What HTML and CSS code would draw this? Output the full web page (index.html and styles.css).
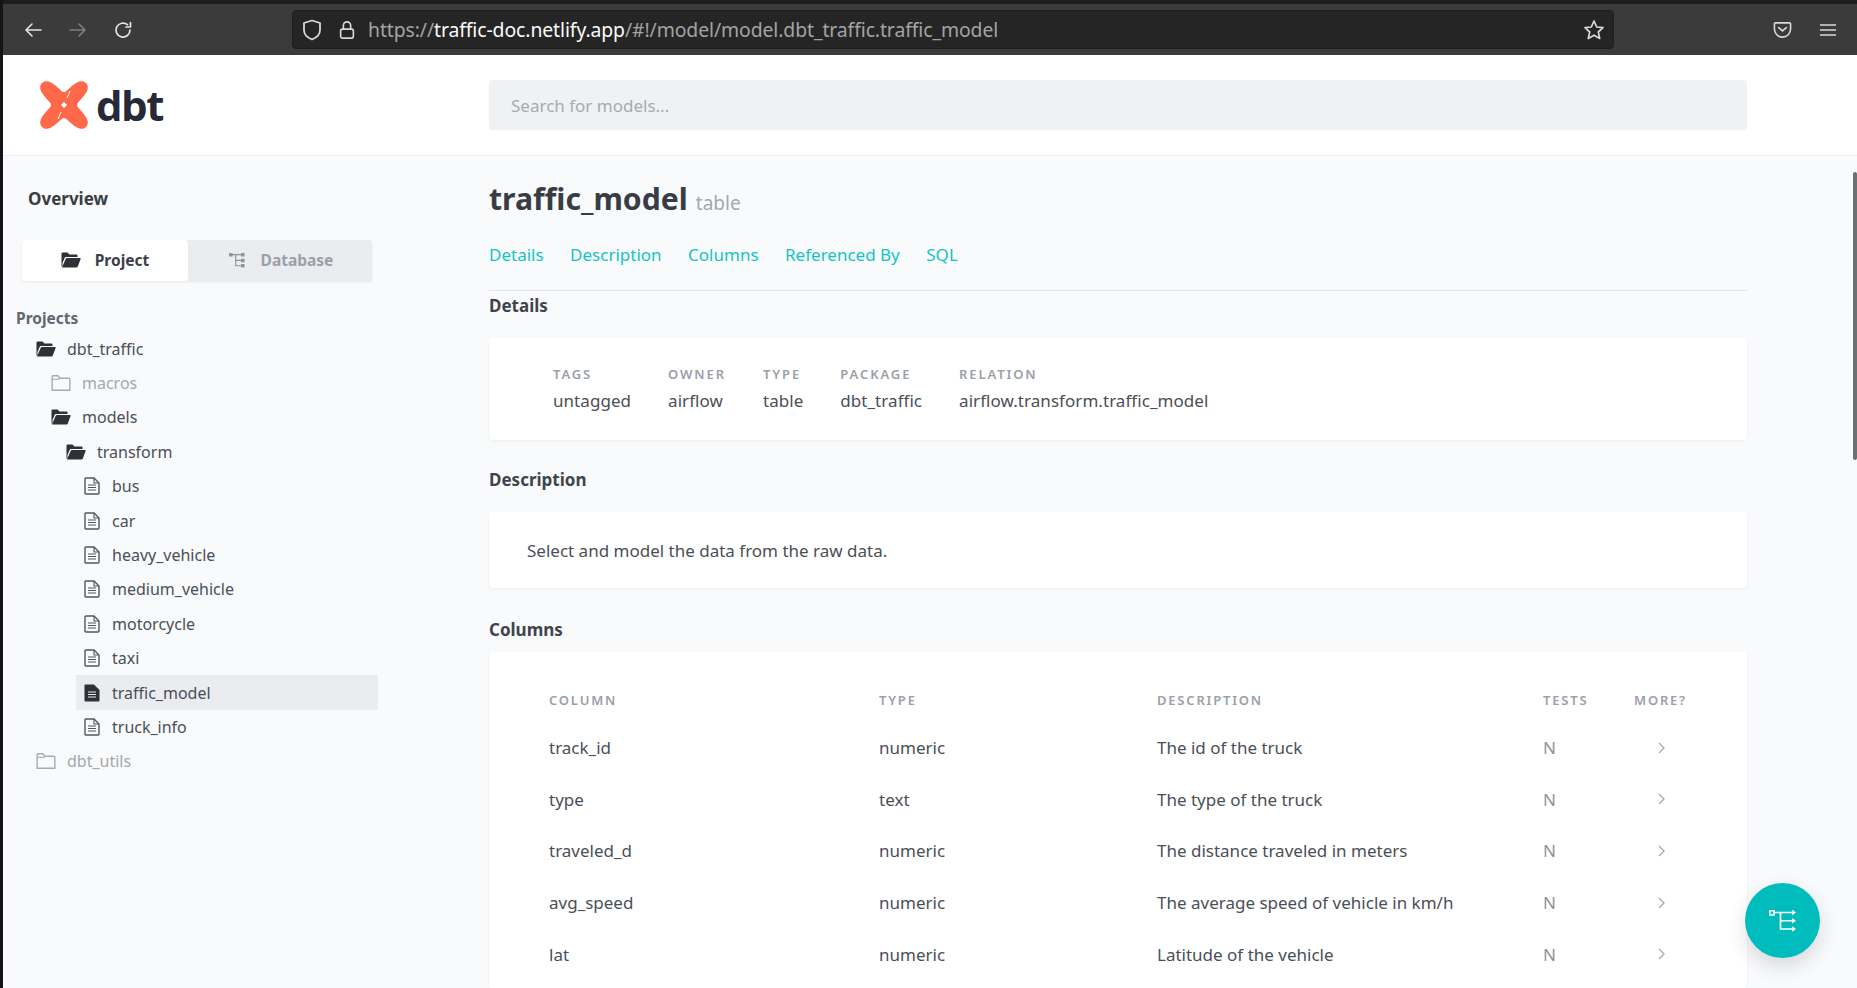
FILE: index.html
```html
<!DOCTYPE html>
<html>
<head>
  <meta name="viewport" content="width=device-width, initial-scale=1.0">
  <title>dbt Docs</title>
  <link rel="stylesheet" href="styles.css">
</head>
<body>
  <svg class="icon_defs" width="0" height="0">
    <symbol id="i_open" viewBox="0 0 20 16">
      <path d="M0.5 14.5V1.5Q0.5 0.5 1.5 0.5H6.5L8.5 2.5H15.5Q16.5 2.5 16.5 3.5V5H5Q4 5 3.6 6L1.5 11V14.5Z" fill="#2d3138"/>
      <path d="M1 15.5L4.6 7Q5 6 6 6H19Q20 6 19.6 7L16.8 14.6Q16.4 15.5 15.5 15.5Z" fill="#2d3138"/>
    </symbol>
    <symbol id="i_closed" viewBox="0 0 18 15">
      <path d="M0.7 14.3V1.7Q0.7 0.7 1.7 0.7H6L8 3H16.3Q17.3 3 17.3 4V14.3Z" fill="none" stroke="#a5abb3" stroke-width="1.3"/>
      <path d="M0.7 4H8" fill="none" stroke="#a5abb3" stroke-width="1"/>
    </symbol>
    <symbol id="i_file" viewBox="0 0 16 18">
      <path d="M1 16V2Q1 1 2 1H10L15 6V16Q15 17 14 17H2Q1 17 1 16Z" fill="none" stroke="#51565e" stroke-width="1.4"/>
      <path d="M10 1V6H15M4 8H12M4 10.5H12M4 13H12" fill="none" stroke="#51565e" stroke-width="1.1"/>
    </symbol>
    <symbol id="i_file_on" viewBox="0 0 16 18">
      <path d="M0.5 16.5V1.5Q0.5 0.5 1.5 0.5H10L15.5 6V16.5Q15.5 17.5 14.5 17.5H1.5Q0.5 17.5 0.5 16.5Z" fill="#2d3138"/>
      <path d="M4 8H12M4 10.5H12M4 13H12" fill="none" stroke="#eaebee" stroke-width="1.2"/>
    </symbol>
    <symbol id="i_tree" viewBox="0 0 18 18">
      <path d="M3 3H15M7.5 3V15.5H15M7.5 9.5H15" fill="none" stroke="#8f959d" stroke-width="1.3"/>
      <path d="M0 1H4V5H0ZM13.5 1H17.5V5H13.5ZM13.5 7.5H17.5V11.5H13.5ZM13.5 13.5H17.5V17.5H13.5Z" fill="#8f959d"/>
    </symbol>
    <symbol id="i_graph" viewBox="0 0 27 25">
      <path d="M0.8 2.8H5V7H0.8Z" fill="none" stroke="#fff" stroke-width="1.6"/>
      <path d="M5 4.5H24M11.5 4.5V21H24M11.5 12.7H24" fill="none" stroke="#fff" stroke-width="1.6"/>
      <path d="M23 1.8L27 4.5L23 7.2ZM23 10L27 12.7L23 15.4ZM23 18.3L27 21L23 23.7Z" fill="#fff"/>
    </symbol>
    <symbol id="i_more" viewBox="0 0 7 12">
      <path d="M1 1L6 6L1 11" fill="none" stroke="#a3a8af" stroke-width="1.3"/>
    </symbol>
  </svg>

  <div class="browser_bar">
    <div class="nav_btns">
      <svg class="chrome_icon" viewBox="0 0 20 20"><path d="M18 10H3M9 4L3 10L9 16" fill="none" stroke="#e4e4e4" stroke-width="1.6" stroke-linecap="round" stroke-linejoin="round"/></svg>
      <svg class="chrome_icon" viewBox="0 0 20 20"><path d="M2 10H17M11 4L17 10L11 16" fill="none" stroke="#7f7f7f" stroke-width="1.6" stroke-linecap="round" stroke-linejoin="round"/></svg>
      <svg class="chrome_icon" viewBox="0 0 20 20"><path d="M17 10A7 7 0 1 1 14.5 4.7M17.5 2.5V7H13" fill="none" stroke="#e4e4e4" stroke-width="1.7" stroke-linecap="round" stroke-linejoin="round"/></svg>
    </div>
    <div class="url_bar">
      <svg class="shield" viewBox="0 0 20 22"><path d="M10 1.5L18 4V11C18 16 14 19 10 20.5C6 19 2 16 2 11V4Z" fill="none" stroke="#d8d8d8" stroke-width="1.8" stroke-linejoin="round"/></svg>
      <svg class="lock" viewBox="0 0 18 22"><path d="M5 10V6A4 4 0 0 1 13 6V10" fill="none" stroke="#d8d8d8" stroke-width="1.8"/><rect x="2" y="10" width="14" height="10" rx="2" fill="none" stroke="#d8d8d8" stroke-width="1.8"/></svg>
      <span class="url_text"><span class="url_dim">https://</span>traffic-doc.netlify.app<span class="url_dim">/#!/model/model.dbt_traffic.traffic_model</span></span>
      <svg class="star" viewBox="0 0 22 22"><path d="M11 2L13.7 8L20 8.7L15.3 13L16.7 19.5L11 16.2L5.3 19.5L6.7 13L2 8.7L8.3 8Z" fill="none" stroke="#d8d8d8" stroke-width="1.7" stroke-linejoin="round"/></svg>
    </div>
    <div class="bar_right">
      <svg class="pocket" viewBox="0 0 20 18"><path d="M2.5 1.5H17.5Q18.5 1.5 18.5 2.5V8A8.5 8.5 0 0 1 1.5 8V2.5Q1.5 1.5 2.5 1.5Z" fill="none" stroke="#d8d8d8" stroke-width="1.7"/><path d="M6 6.5L10 10L14 6.5" fill="none" stroke="#d8d8d8" stroke-width="1.7" stroke-linecap="round"/></svg>
      <svg class="burger" viewBox="0 0 16 14"><path d="M0 2H16M0 7H16M0 12H16" stroke="#d8d8d8" stroke-width="1.6"/></svg>
    </div>
  </div>

  <div class="page">
    <header class="site_header">
      <div class="logo">
        <svg class="logo_mark" viewBox="0 0 48 48">
          <path d="M2 2C4.5-.5 8-.2 11 1.5C13 2.6 15 4 21 9.5Q24 12.5 27 9.5C33 4 35 2.6 37 1.5C40-.2 43.5-.5 46 2C48.5 4.5 48.2 8 46.5 11C45.4 13 44 15 38.5 21Q35.5 24 38.5 27C44 33 45.4 35 46.5 37C48.2 40 48.5 43.5 46 46C43.5 48.5 40 48.2 37 46.5C35 45.4 33 44 27 38.5Q24 35.5 21 38.5C15 44 13 45.4 11 46.5C8 48.2 4.5 48.5 2 46C-.5 43.5-.2 40 1.5 37C2.6 35 4 33 9.5 27Q12.5 24 9.5 21C4 15 2.6 13 1.5 11C-.2 8-.5 4.5 2 2Z" fill="#ff694a"/>
          <path d="M24 21L27 24L24 27L21 24Z" fill="#fff"/>
          <path d="M30 10C29 12.500 28 15 27 17M18 38C19 35.500 20 33 21 31" fill="none" stroke="#fff" stroke-width="1"/>
        </svg>
        <span class="logo_text">dbt</span>
      </div>
      <div class="search_box">Search for models...</div>
    </header>

    <div class="page_body">
      <aside class="sidebar">
        <div class="overview_link">Overview</div>
        <div class="switcher">
          <div class="switch_tab switch_active"><svg class="switch_icon"><use href="#i_open"/></svg>Project</div>
          <div class="switch_tab"><svg class="switch_icon"><use href="#i_tree"/></svg>Database</div>
        </div>
        <div class="tree_title">Projects</div>
        <ul class="tree">
          <li class="tree_row depth1"><svg class="folder_icon"><use href="#i_open"/></svg>dbt_traffic</li>
          <li class="tree_row depth2 faded"><svg class="folder_icon"><use href="#i_closed"/></svg>macros</li>
          <li class="tree_row depth2"><svg class="folder_icon"><use href="#i_open"/></svg>models</li>
          <li class="tree_row depth3"><svg class="folder_icon"><use href="#i_open"/></svg>transform</li>
          <li class="tree_row depth4"><svg class="file_icon"><use href="#i_file"/></svg>bus</li>
          <li class="tree_row depth4"><svg class="file_icon"><use href="#i_file"/></svg>car</li>
          <li class="tree_row depth4"><svg class="file_icon"><use href="#i_file"/></svg>heavy_vehicle</li>
          <li class="tree_row depth4"><svg class="file_icon"><use href="#i_file"/></svg>medium_vehicle</li>
          <li class="tree_row depth4"><svg class="file_icon"><use href="#i_file"/></svg>motorcycle</li>
          <li class="tree_row depth4"><svg class="file_icon"><use href="#i_file"/></svg>taxi</li>
          <li class="tree_row depth4 selected"><svg class="file_icon"><use href="#i_file_on"/></svg>traffic_model</li>
          <li class="tree_row depth4"><svg class="file_icon"><use href="#i_file"/></svg>truck_info</li>
          <li class="tree_row depth1 faded"><svg class="folder_icon"><use href="#i_closed"/></svg>dbt_utils</li>
        </ul>
      </aside>

      <main class="content">
        <div class="title_line">
          <h1 class="model_name">traffic_model</h1>
          <small class="model_kind">table</small>
        </div>
        <nav class="section_links">
          <a>Details</a>
          <a>Description</a>
          <a>Columns</a>
          <a>Referenced By</a>
          <a>SQL</a>
        </nav>
        <h2 class="section_head head_details">Details</h2>
        <section class="card details_card">
          <div class="stat"><div class="stat_label">TAGS</div><div class="stat_value">untagged</div></div>
          <div class="stat"><div class="stat_label">OWNER</div><div class="stat_value">airflow</div></div>
          <div class="stat"><div class="stat_label">TYPE</div><div class="stat_value">table</div></div>
          <div class="stat"><div class="stat_label">PACKAGE</div><div class="stat_value">dbt_traffic</div></div>
          <div class="stat"><div class="stat_label">RELATION</div><div class="stat_value">airflow.transform.traffic_model</div></div>
        </section>
        <h2 class="section_head head_desc">Description</h2>
        <section class="card desc_card">Select and model the data from the raw data.</section>
        <h2 class="section_head head_cols">Columns</h2>
        <section class="card cols_card">
          <table class="cols_table">
            <thead>
              <tr><th class="c_name">COLUMN</th><th class="c_type">TYPE</th><th class="c_desc">DESCRIPTION</th><th class="c_tests">TESTS</th><th>MORE?</th></tr>
            </thead>
            <tbody>
              <tr><td>track_id</td><td>numeric</td><td>The id of the truck</td><td class="dim">N</td><td class="more"><svg class="more_icon"><use href="#i_more"/></svg></td></tr>
              <tr><td>type</td><td>text</td><td>The type of the truck</td><td class="dim">N</td><td class="more"><svg class="more_icon"><use href="#i_more"/></svg></td></tr>
              <tr><td>traveled_d</td><td>numeric</td><td>The distance traveled in meters</td><td class="dim">N</td><td class="more"><svg class="more_icon"><use href="#i_more"/></svg></td></tr>
              <tr><td>avg_speed</td><td>numeric</td><td>The average speed of vehicle in km/h</td><td class="dim">N</td><td class="more"><svg class="more_icon"><use href="#i_more"/></svg></td></tr>
              <tr><td>lat</td><td>numeric</td><td>Latitude of the vehicle</td><td class="dim">N</td><td class="more"><svg class="more_icon"><use href="#i_more"/></svg></td></tr>
            </tbody>
          </table>
        </section>
      </main>
    </div>
  </div>

  <div class="scroll_thumb"></div>
  <button class="graph_btn"><svg class="graph_icon"><use href="#i_graph"/></svg></button>
</body>
</html>
```

FILE: styles.css
```css
* {
  box-sizing: border-box;
}
html,
body {
  margin: 0;
  height: 100%;
  overflow: hidden;
}
body {
  display: flex;
  flex-direction: column;
  background-color: #f9fafc;
  border-left: 3px solid #17121a;
  font-family: "Noto Sans", sans-serif;
  color: #4a4f57;
}
.icon_defs {
  position: absolute;
}

/* browser toolbar */
.browser_bar {
  flex: none;
  height: 55px;
  display: flex;
  align-items: center;
  background-color: #3b3b3b;
  border-top: 4px solid #1c1c1c;
  padding-right: 21px;
}
.nav_btns {
  width: 289px;
  display: flex;
  gap: 25px;
  padding-left: 20px;
}
.chrome_icon {
  width: 20px;
  height: 20px;
}
.url_bar {
  width: 1322px;
  height: 39px;
  display: flex;
  align-items: center;
  background-color: #252525;
  border: 1px solid #1f1f1f;
  border-radius: 4px;
  padding: 0 8px 0 9px;
}
.shield {
  width: 20px;
  height: 22px;
}
.lock {
  width: 18px;
  height: 20px;
  margin-left: 16px;
}
.url_text {
  flex: 1;
  margin-left: 12px;
  font-size: 19.4px;
  color: #fbfbfb;
  letter-spacing: -0.1px;
}
.url_dim {
  color: #a3a3a3;
}
.star {
  width: 22px;
  height: 22px;
}
.bar_right {
  flex: 1;
  display: flex;
  align-items: center;
  justify-content: flex-end;
  gap: 28px;
}
.pocket {
  width: 19px;
  height: 18px;
}
.burger {
  width: 16px;
  height: 14px;
}

.page {
  flex: 1;
  display: flex;
  flex-direction: column;
  min-height: 0;
}

/* site header */
.site_header {
  flex: none;
  height: 101px;
  display: flex;
  align-items: center;
  background-color: #fff;
  border-bottom: 1px solid #eceef1;
}
.logo {
  width: 486px;
  display: flex;
  align-items: center;
  gap: 8px;
  padding-left: 37px;
}
.logo_mark {
  width: 48px;
  height: 48px;
}
.logo_text {
  font-family: "Open Sans", sans-serif;
  font-weight: 700;
  font-size: 42px;
  line-height: 48px;
  letter-spacing: -1.5px;
  color: #262a38;
}
.search_box {
  width: 1258px;
  height: 50px;
  display: flex;
  align-items: center;
  padding-left: 22px;
  background-color: #f0f1f3;
  border-radius: 4px;
  font-size: 17px;
  color: #a7abb1;
}

.page_body {
  flex: 1;
  display: flex;
  min-height: 0;
}

/* sidebar */
.sidebar {
  width: 486px;
  flex: none;
  padding-top: 31px;
}
.overview_link {
  margin-left: 25px;
  font-size: 17px;
  line-height: 24px;
  font-weight: 700;
  color: #383d45;
}
.switcher {
  display: flex;
  width: 350px;
  height: 41px;
  margin: 29px 0 0 19px;
  background-color: #ebecef;
  border-radius: 4px;
  box-shadow: 0 1px 3px rgba(0,0,0,0.08);
}
.switch_tab {
  flex: 1;
  display: flex;
  align-items: center;
  justify-content: center;
  gap: 14px;
  padding-bottom: 2px;
  font-size: 15.5px;
  font-weight: 700;
  color: #9aa1aa;
}
.switch_active {
  flex: none;
  width: 166px;
  background-color: #fff;
  border-radius: 4px;
  color: #3c4149;
}
.switch_icon {
  width: 20px;
  height: 16px;
}
.tree_title {
  margin: 26px 0 0 13px;
  font-size: 15.5px;
  line-height: 22px;
  font-weight: 700;
  color: #63686f;
}
.tree {
  list-style: none;
  margin: 2.5px 0 0;
  padding: 0;
}
.tree_row {
  height: 34.4px;
  display: flex;
  align-items: center;
  font-size: 16px;
  color: #4a4f57;
}
.depth1 {
  padding-left: 33px;
}
.depth2 {
  padding-left: 48px;
}
.depth3 {
  padding-left: 63px;
}
.depth4 {
  padding-left: 81px;
  width: 375px;
}
.faded {
  color: #a3a8af;
}
.folder_icon {
  width: 20px;
  height: 16px;
  margin-right: 11px;
}
.file_icon {
  width: 16px;
  height: 18px;
  margin-right: 12px;
}
.selected {
  background: linear-gradient(#ebecef, #ebecef) no-repeat 73px 0 / 302px 100%;
}

/* main column */
.content {
  width: 1258px;
  flex: none;
  display: flex;
  flex-direction: column;
  min-height: 0;
}
.title_line {
  display: flex;
  align-items: baseline;
  gap: 8px;
  margin-top: 21px;
  height: 44px;
}
.model_name {
  margin: 0;
  font-size: 30.2px;
  line-height: 44px;
  font-weight: 700;
  color: #383d45;
}
.model_kind {
  font-size: 19px;
  color: #a3a8af;
}
.section_links {
  display: flex;
  gap: 26.5px;
  height: 70px;
  padding-top: 21px;
  border-bottom: 1px solid #e2e4e8;
  font-size: 17px;
  line-height: 26px;
  color: #14c4c4;
}
.section_head {
  margin: 0;
  font-size: 17px;
  line-height: 24px;
  font-weight: 700;
  color: #3f444c;
}
.head_details {
  margin-top: 3px;
}
.head_desc {
  margin-top: 28px;
}
.head_cols {
  margin-top: 30px;
}
.card {
  background-color: #fff;
  border-radius: 4px;
  box-shadow: 0 1px 3px rgba(0,0,0,0.06);
}
.details_card {
  display: flex;
  gap: 37px;
  height: 102px;
  margin-top: 20px;
  padding: 26px 0 0 64px;
}
.stat_label {
  font-size: 13px;
  line-height: 20px;
  font-weight: 600;
  letter-spacing: 1.9px;
  color: #9aa0a8;
}
.stat_value {
  margin-top: 4px;
  font-size: 17px;
  line-height: 26px;
  letter-spacing: 0.05px;
  color: #4a4f57;
}
.desc_card {
  height: 76px;
  margin-top: 20px;
  padding-left: 38px;
  font-size: 17px;
  line-height: 78px;
}
.cols_card {
  flex: 1;
  min-height: 0;
  margin-top: 10px;
  padding: 25px 0 0 60px;
}
.cols_table {
  border-collapse: collapse;
  table-layout: fixed;
  width: 1170px;
  font-size: 17px;
}
.cols_table th {
  text-align: left;
  height: 45px;
  padding: 0;
  font-size: 13px;
  font-weight: 600;
  letter-spacing: 1.8px;
  color: #9aa0a8;
}
.cols_table td {
  height: 51.6px;
  padding: 0;
  color: #4a4f57;
}
.c_name {
  width: 330px;
}
.c_type {
  width: 278px;
}
.c_desc {
  width: 386px;
}
.c_tests {
  width: 91px;
}
.cols_table .dim {
  color: #8d939b;
}
.cols_table .more {
  padding-left: 24px;
}
.more_icon {
  display: block;
  width: 7px;
  height: 12px;
}

/* overlays */
.scroll_thumb {
  position: fixed;
  right: 0;
  top: 172px;
  width: 4px;
  height: 288px;
  background-color: #6d6f72;
  border-radius: 2px;
}
.graph_btn {
  position: fixed;
  left: 1745px;
  top: 883px;
  width: 75px;
  height: 75px;
  display: flex;
  align-items: center;
  justify-content: center;
  padding: 0;
  border: none;
  border-radius: 50%;
  background-color: #00bcbc;
  box-shadow: 0 8px 20px rgba(0,0,0,0.14);
}
.graph_icon {
  width: 27px;
  height: 25px;
}
```
